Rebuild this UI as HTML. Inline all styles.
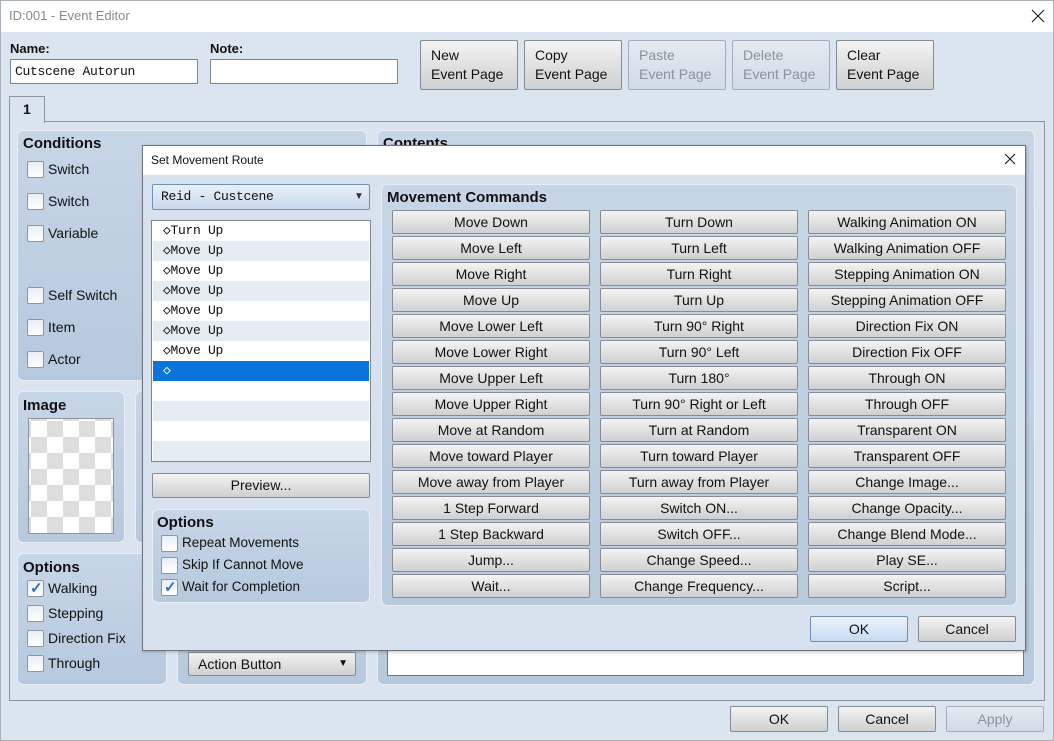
<!DOCTYPE html>
<html><head><meta charset="utf-8"><style>
*{box-sizing:border-box;margin:0;padding:0}
body{width:1054px;height:741px;overflow:hidden;position:relative;background:#dbe5f0;font-family:"Liberation Sans",sans-serif;font-size:14px;color:#111}
.a{position:absolute}
.panel{position:absolute;border-radius:6px;background:linear-gradient(#c7d6e7,#b6c9dd);border:1px solid #e8eef6}
.bt{position:absolute;height:24px;border:1px solid #858c95;border-radius:2px;background:linear-gradient(#f4f4f4,#e3e3e3 45%,#cfd0d2);text-align:center;line-height:22px;font-size:14px;color:#111}
.bt.dis{color:#8a929b;border-color:#a6adb6;background:linear-gradient(#e4eaf1,#d1dbe6)}
.cb{position:absolute;width:17px;height:17px;border:1px solid #8e96a0;border-radius:2px;background:linear-gradient(#e9eef4,#fff)}
.lbl{position:absolute;font-size:14px;white-space:nowrap}
.h{position:absolute;font-weight:bold;font-size:15px}
.inp{position:absolute;background:#fff;border:1px solid #7d8591}
.row{position:absolute;left:1px;width:216px;height:20px;font-family:"Liberation Mono",monospace;font-size:13px;line-height:20px;padding-left:10px;letter-spacing:-0.3px}
.chk{color:#2f6cc0;font-weight:bold;font-size:15px;position:absolute;left:2px;top:-2px}
</style></head><body>
<div class="a" style="left:0;top:0;width:1054px;height:32px;background:#fff"></div>
<div class="lbl" style="left:9px;top:8px;color:#8a8a8a;font-size:13px">ID:001 - Event Editor</div>
<svg class="a" style="left:1031px;top:9px" width="14" height="14"><path d="M1 1L13 13M13 1L1 13" stroke="#222" stroke-width="1.2"/></svg>
<div class="a" style="left:0;top:0;width:1054px;height:741px;border:1px solid #a9b0b8;pointer-events:none"></div>

<div class="lbl" style="left:10px;top:41px;font-weight:bold;font-size:13px">Name:</div>
<div class="lbl" style="left:210px;top:41px;font-weight:bold;font-size:13px">Note:</div>
<div class="inp" style="left:10px;top:59px;width:188px;height:25px"></div>
<div class="lbl" style="left:15px;top:64px;font-family:'Liberation Mono',monospace;font-size:13px;letter-spacing:-0.3px">Cutscene Autorun</div>
<div class="inp" style="left:210px;top:59px;width:188px;height:25px"></div>

<div class="bt" style="left:420px;top:40px;width:98px;height:50px;text-align:left;padding:5px 0 0 10px;line-height:19px">New<br>Event Page</div>
<div class="bt" style="left:524px;top:40px;width:98px;height:50px;text-align:left;padding:5px 0 0 10px;line-height:19px">Copy<br>Event Page</div>
<div class="bt dis" style="left:628px;top:40px;width:98px;height:50px;text-align:left;padding:5px 0 0 10px;line-height:19px">Paste<br>Event Page</div>
<div class="bt dis" style="left:732px;top:40px;width:98px;height:50px;text-align:left;padding:5px 0 0 10px;line-height:19px">Delete<br>Event Page</div>
<div class="bt" style="left:836px;top:40px;width:98px;height:50px;text-align:left;padding:5px 0 0 10px;line-height:19px">Clear<br>Event Page</div>

<div class="a" style="left:9px;top:121px;width:1036px;height:580px;border:1px solid #8c949e;background:#dae4ef"></div>
<div class="a" style="left:9px;top:96px;width:36px;height:27px;border:1px solid #8c949e;border-bottom:none;background:#dae4ef"></div>
<div class="lbl" style="left:23px;top:101px;font-weight:bold">1</div>

<div class="panel" style="left:17px;top:130px;width:350px;height:251px"></div>
<div class="h" style="left:23px;top:135px">Conditions</div>
<div class="cb" style="left:27px;top:161px"></div><div class="lbl" style="left:48px;top:161px">Switch</div>
<div class="cb" style="left:27px;top:193px"></div><div class="lbl" style="left:48px;top:193px">Switch</div>
<div class="cb" style="left:27px;top:225px"></div><div class="lbl" style="left:48px;top:225px">Variable</div>
<div class="cb" style="left:27px;top:287px"></div><div class="lbl" style="left:48px;top:287px">Self Switch</div>
<div class="cb" style="left:27px;top:319px"></div><div class="lbl" style="left:48px;top:319px">Item</div>
<div class="cb" style="left:27px;top:351px"></div><div class="lbl" style="left:48px;top:351px">Actor</div>

<div class="panel" style="left:377px;top:130px;width:658px;height:555px"></div>
<div class="h" style="left:383px;top:135px">Contents</div>
<div class="a" style="left:387px;top:148px;width:637px;height:528px;background:#fff;border:1px solid #6f7780"></div>

<div class="panel" style="left:17px;top:391px;width:108px;height:152px"></div>
<div class="h" style="left:23px;top:397px">Image</div>
<div class="a" style="left:28px;top:418px;width:86px;height:116px;border:1px solid #8c949e;background-color:#fff;background-image:conic-gradient(#ddd 25%,#fff 0 50%,#ddd 0 75%,#fff 0);background-size:32px 32px;background-position:18px 18px"></div>
<div class="panel" style="left:135px;top:391px;width:30px;height:152px"></div>

<div class="panel" style="left:17px;top:553px;width:150px;height:132px"></div>
<div class="h" style="left:23px;top:559px">Options</div>
<div class="cb" style="left:27px;top:580px"><span class="chk">✓</span></div><div class="lbl" style="left:48px;top:580px">Walking</div>
<div class="cb" style="left:27px;top:605px"></div><div class="lbl" style="left:48px;top:605px">Stepping</div>
<div class="cb" style="left:27px;top:630px"></div><div class="lbl" style="left:48px;top:630px">Direction Fix</div>
<div class="cb" style="left:27px;top:655px"></div><div class="lbl" style="left:48px;top:655px">Through</div>

<div class="panel" style="left:177px;top:553px;width:190px;height:132px"></div>
<div class="bt" style="left:188px;top:652px;width:168px;height:24px;text-align:left;padding-left:9px">Action Button<span style="position:absolute;right:7px;font-size:10px">▼</span></div>

<div class="bt" style="left:730px;top:706px;width:98px;height:26px;line-height:24px">OK</div>
<div class="bt" style="left:838px;top:706px;width:98px;height:26px;line-height:24px">Cancel</div>
<div class="bt dis" style="left:946px;top:706px;width:98px;height:26px;line-height:24px">Apply</div>

<div class="a" style="left:142px;top:145px;width:884px;height:506px;background:#d7e2ee;border:1px solid #6c737c;box-shadow:1px 1px 3px rgba(0,0,0,.25)"></div>
<div class="a" style="left:143px;top:146px;width:882px;height:29px;background:#fff"></div>
<div class="lbl" style="left:151px;top:153px;font-size:12px">Set Movement Route</div>
<svg class="a" style="left:1004px;top:153px" width="12" height="12"><path d="M1 1L11 11M11 1L1 11" stroke="#222" stroke-width="1.2"/></svg>

<div class="a" style="left:152px;top:184px;width:218px;height:26px;border:1px solid #6f90b8;border-radius:2px;background:linear-gradient(#e8f0f9,#c9d9eb)"></div>
<div class="lbl" style="left:161px;top:189px;font-family:'Liberation Mono',monospace;font-size:13px;letter-spacing:-0.3px">Reid - Custcene</div>
<div class="lbl" style="left:354px;top:191px;font-size:10px;color:#333">▼</div>

<div class="a" style="left:151px;top:220px;width:220px;height:242px;border:1px solid #7d8591;background:#fff;overflow:hidden">
<div class="row" style="top:0;background:#fff">◇Turn Up</div>
<div class="row" style="top:20px;background:#e6ecf3">◇Move Up</div>
<div class="row" style="top:40px;background:#fff">◇Move Up</div>
<div class="row" style="top:60px;background:#e6ecf3">◇Move Up</div>
<div class="row" style="top:80px;background:#fff">◇Move Up</div>
<div class="row" style="top:100px;background:#e6ecf3">◇Move Up</div>
<div class="row" style="top:120px;background:#fff">◇Move Up</div>
<div class="row" style="top:140px;background:#0a74da;color:#fff">◇</div>
<div class="row" style="top:160px;background:#fff"></div>
<div class="row" style="top:180px;background:#e6ecf3"></div>
<div class="row" style="top:200px;background:#fff"></div>
<div class="row" style="top:220px;background:#e6ecf3"></div>
</div>

<div class="bt" style="left:152px;top:473px;width:218px;height:25px">Preview...</div>

<div class="panel" style="left:152px;top:509px;width:218px;height:94px"></div>
<div class="h" style="left:157px;top:514px">Options</div>
<div class="cb" style="left:161px;top:535px"></div><div class="lbl" style="left:182px;top:535px;font-size:13.5px">Repeat Movements</div>
<div class="cb" style="left:161px;top:557px"></div><div class="lbl" style="left:182px;top:557px;font-size:13.5px">Skip If Cannot Move</div>
<div class="cb" style="left:161px;top:579px"><span class="chk">✓</span></div><div class="lbl" style="left:182px;top:579px;font-size:13.5px">Wait for Completion</div>

<div class="panel" style="left:381px;top:184px;width:636px;height:422px"></div>
<div class="h" style="left:387px;top:189px">Movement Commands</div>

<div class="bt" style="left:392px;top:210px;width:198px">Move Down</div>
<div class="bt" style="left:392px;top:236px;width:198px">Move Left</div>
<div class="bt" style="left:392px;top:262px;width:198px">Move Right</div>
<div class="bt" style="left:392px;top:288px;width:198px">Move Up</div>
<div class="bt" style="left:392px;top:314px;width:198px">Move Lower Left</div>
<div class="bt" style="left:392px;top:340px;width:198px">Move Lower Right</div>
<div class="bt" style="left:392px;top:366px;width:198px">Move Upper Left</div>
<div class="bt" style="left:392px;top:392px;width:198px">Move Upper Right</div>
<div class="bt" style="left:392px;top:418px;width:198px">Move at Random</div>
<div class="bt" style="left:392px;top:444px;width:198px">Move toward Player</div>
<div class="bt" style="left:392px;top:470px;width:198px">Move away from Player</div>
<div class="bt" style="left:392px;top:496px;width:198px">1 Step Forward</div>
<div class="bt" style="left:392px;top:522px;width:198px">1 Step Backward</div>
<div class="bt" style="left:392px;top:548px;width:198px">Jump...</div>
<div class="bt" style="left:392px;top:574px;width:198px">Wait...</div>

<div class="bt" style="left:600px;top:210px;width:198px">Turn Down</div>
<div class="bt" style="left:600px;top:236px;width:198px">Turn Left</div>
<div class="bt" style="left:600px;top:262px;width:198px">Turn Right</div>
<div class="bt" style="left:600px;top:288px;width:198px">Turn Up</div>
<div class="bt" style="left:600px;top:314px;width:198px">Turn 90° Right</div>
<div class="bt" style="left:600px;top:340px;width:198px">Turn 90° Left</div>
<div class="bt" style="left:600px;top:366px;width:198px">Turn 180°</div>
<div class="bt" style="left:600px;top:392px;width:198px">Turn 90° Right or Left</div>
<div class="bt" style="left:600px;top:418px;width:198px">Turn at Random</div>
<div class="bt" style="left:600px;top:444px;width:198px">Turn toward Player</div>
<div class="bt" style="left:600px;top:470px;width:198px">Turn away from Player</div>
<div class="bt" style="left:600px;top:496px;width:198px">Switch ON...</div>
<div class="bt" style="left:600px;top:522px;width:198px">Switch OFF...</div>
<div class="bt" style="left:600px;top:548px;width:198px">Change Speed...</div>
<div class="bt" style="left:600px;top:574px;width:198px">Change Frequency...</div>

<div class="bt" style="left:808px;top:210px;width:198px">Walking Animation ON</div>
<div class="bt" style="left:808px;top:236px;width:198px">Walking Animation OFF</div>
<div class="bt" style="left:808px;top:262px;width:198px">Stepping Animation ON</div>
<div class="bt" style="left:808px;top:288px;width:198px">Stepping Animation OFF</div>
<div class="bt" style="left:808px;top:314px;width:198px">Direction Fix ON</div>
<div class="bt" style="left:808px;top:340px;width:198px">Direction Fix OFF</div>
<div class="bt" style="left:808px;top:366px;width:198px">Through ON</div>
<div class="bt" style="left:808px;top:392px;width:198px">Through OFF</div>
<div class="bt" style="left:808px;top:418px;width:198px">Transparent ON</div>
<div class="bt" style="left:808px;top:444px;width:198px">Transparent OFF</div>
<div class="bt" style="left:808px;top:470px;width:198px">Change Image...</div>
<div class="bt" style="left:808px;top:496px;width:198px">Change Opacity...</div>
<div class="bt" style="left:808px;top:522px;width:198px">Change Blend Mode...</div>
<div class="bt" style="left:808px;top:548px;width:198px">Play SE...</div>
<div class="bt" style="left:808px;top:574px;width:198px">Script...</div>

<div class="bt" style="left:810px;top:616px;width:98px;height:26px;line-height:24px;border-color:#6f8fb5;background:linear-gradient(#eaf3fc,#c6dcf1)">OK</div>
<div class="bt" style="left:918px;top:616px;width:98px;height:26px;line-height:24px">Cancel</div>
</body></html>
